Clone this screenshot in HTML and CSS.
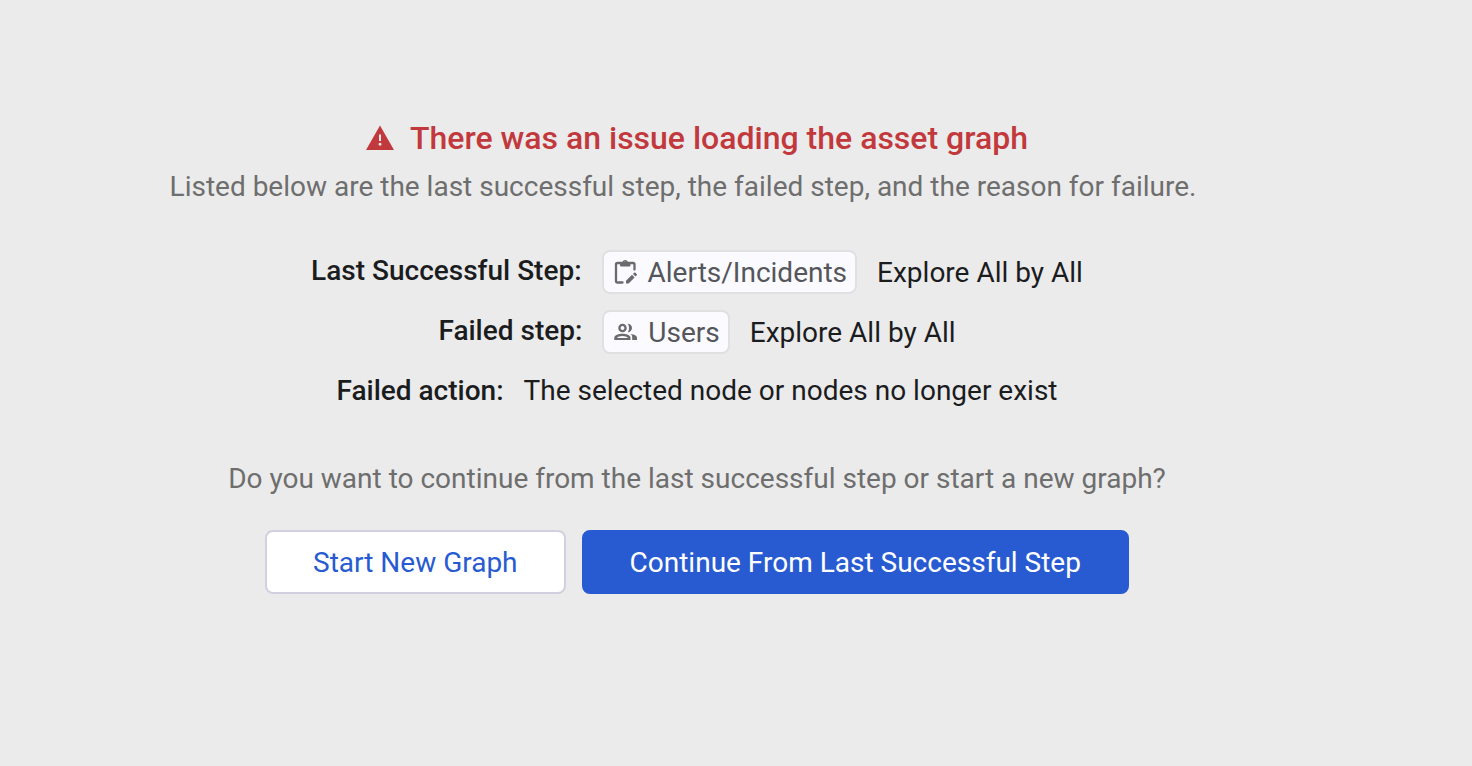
FILE: index.html
```html
<!DOCTYPE html>
<html lang="en">
<head>
<meta charset="utf-8">
<title>Asset graph</title>
<link rel="stylesheet" href="styles.css">
</head>
<body>
<main class="error">
  <h1 class="title">
    <svg class="title-icon" viewBox="0 0 28 26" aria-hidden="true"><path fill="currentColor" fill-rule="evenodd" d="M14 .5 28 25H0ZM13 9.500v6.500h2V9.500Zm1 8.300a1.500 1.500 0 1 0 .1 0Z"/></svg>
    There was an issue loading the asset graph
  </h1>
  <p class="lead">Listed below are the last successful step, the failed step, and the reason for failure.</p>
  <dl class="details">
    <div class="row">
      <dt>Last Successful Step:</dt>
      <dd><span class="chip"><svg class="chip-icon" viewBox="0 0 26 26" aria-hidden="true"><path fill="none" stroke="currentColor" stroke-width="2.300" stroke-linecap="round" d="M10.500 23.500H5.500Q4 23.500 4 22V5.500Q4 4 5.500 4H21Q22.500 4 22.500 5.500V10.500"/><path fill="currentColor" fill-rule="evenodd" d="M8 3h2.400a3 3 0 0 1 5.600 0h2.400v3.500q0 1-1 1H9q-1 0-1-1ZM13.200 2.500a1.100 1.100 0 1 0 .1 0Z"/><path fill="currentColor" d="M14 21.800l6-6 2.600 2.600-6 6H14ZM20.900 14.900l1.200-1.200q.7-.6 1.400 0l1.200 1.200q.6.700 0 1.400l-1.200 1.200Z"/></svg>Alerts/Incidents</span><span class="step">Explore All by All</span></dd>
    </div>
    <div class="row">
      <dt>Failed step:</dt>
      <dd><span class="chip"><svg class="chip-icon" viewBox="0 0 26 26" aria-hidden="true"><circle cx="10.500" cy="9" r="3.100" fill="none" stroke="currentColor" stroke-width="2.300"/><path fill="currentColor" fill-rule="evenodd" d="M2.300 21v-2.300C2.300 16 7 14.800 10.400 14.800S18.500 16 18.500 18.700V21ZM5 18.900h10.800c-.8-1-3-1.800-5.400-1.800S5.800 17.900 5 18.900ZM15.800 4.800a4.200 4.200 0 1 1 0 8.400c1.700-2.300 1.700-6.100 0-8.400ZM18.600 15c3.400.5 6.400 1.500 6.400 3.700V21h-4.800v-2.300c0-1.600-.4-2.700-1.600-3.700Z"/></svg>Users</span><span class="step">Explore All by All</span></dd>
    </div>
    <div class="row">
      <dt>Failed action:</dt>
      <dd>The selected node or nodes no longer exist</dd>
    </div>
  </dl>
  <p class="question">Do you want to continue from the last successful step or start a new graph?</p>
  <div class="actions">
    <button class="button" type="button">Start New Graph</button>
    <button class="button primary" type="button">Continue From Last Successful Step</button>
  </div>
</main>
</body>
</html>
```
FILE: styles.css
```css
* { box-sizing: border-box; }
body { margin: 0; background: #ebebeb; color: #1b1c1e; font: 28px/42px Roboto, sans-serif; }
.error { display: flex; flex-direction: column; align-items: center; padding: 116px 78px 0 0; }
.title { display: flex; align-items: center; gap: 16px; margin: 0; color: #c2393d; font-size: 32px; line-height: 44px; font-weight: 500; }
.title-icon { width: 28px; height: 26px; }
.lead, .question { margin: 0; color: #6e6e6e; }
.lead { margin-top: 6px; padding-right: 28px; }
.details { display: flex; flex-direction: column; align-items: center; gap: 16px; margin: 42px 0 0; }
.row { display: flex; gap: 20px; }
dt { font-weight: 500; }
dd { display: flex; align-items: center; gap: 20px; margin: 0; }
.step { padding-top: 2px; }
.chip { display: flex; align-items: center; gap: 10px; height: 44px; padding: 2px 8px 0; border: 2px solid #e0e0e2; border-radius: 8px; background: #fafaff; color: #55565a; }
.chip-icon { width: 26px; height: 26px; margin-bottom: 2px; color: #6b6b6c; }
.question { margin-top: 46px; }
.actions { display: flex; gap: 16px; margin-top: 30px; }
.button { height: 64px; padding: 2px 46px 0; border: 2px solid #d0d0e0; border-radius: 8px; background: #fff; color: #285bd2; font: 28px/40px Roboto, sans-serif; }
.primary { border-color: #285bd2; background: #285bd2; color: #fff; }
```
